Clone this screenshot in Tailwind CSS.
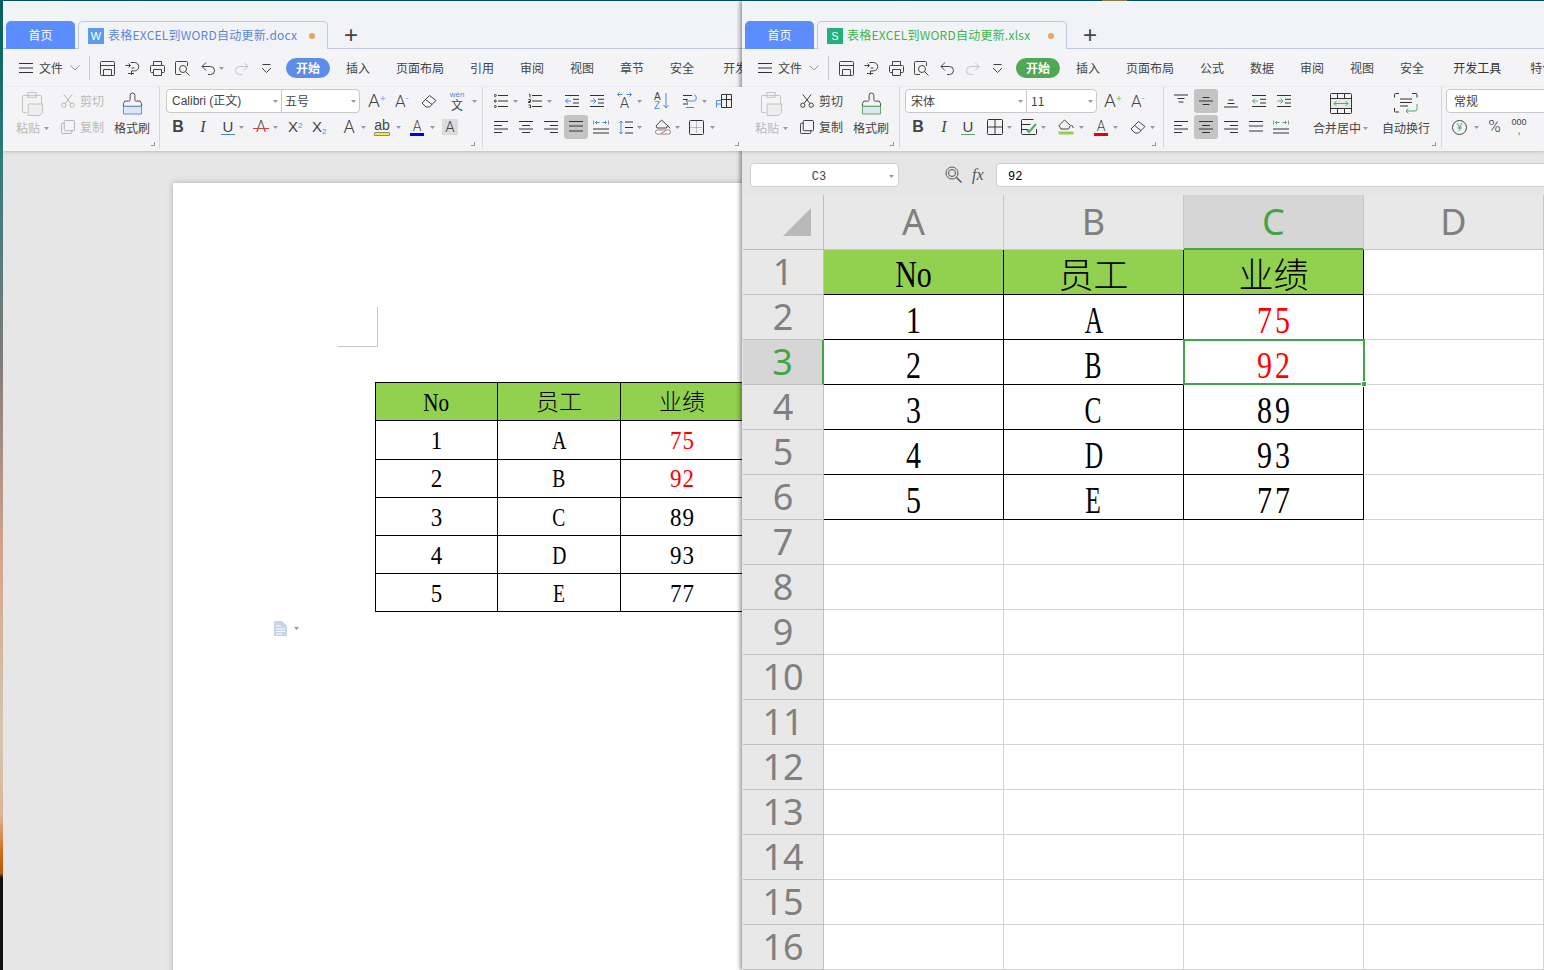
<!DOCTYPE html>
<html lang="zh-CN">
<head>
  <meta charset="UTF-8" />
  <title>表格EXCEL到WORD自动更新</title>
  <script src="https://cdn.jsdelivr.net/npm/@tailwindcss/browser@4"></script>
</head>
<body class="relative w-[1544px] h-[970px] overflow-hidden bg-[linear-gradient(180deg,#005e60_0%,#2f7a7c_16%,#7b7a7a_36%,#d9a58c_58%,#d2c7b0_76%,#dcb596_84%,#cc6a1c_88%,#b85a14_90%,#111111_90.5%,#111111_100%)] font-['Noto_Sans_CJK_SC',sans-serif] text-[12px] text-[#444444]">

  <svg class="hidden" xmlns="http://www.w3.org/2000/svg">
    <symbol id="caret" viewBox="0 0 5 3"><path d="M0 0h5L2.500 3z" fill="#999999"/></symbol>
    <symbol id="menu" viewBox="0 0 14 12"><path d="M0 1.500h14M0 6h14M0 10.500h14" stroke="#333333" fill="none"/></symbol>
    <symbol id="chev" viewBox="0 0 10 6"><path d="M.5.500 5 5 9.500.500" stroke="#999999" fill="none"/></symbol>
    <symbol id="save" viewBox="0 0 15 15"><path d="M1.500 .5h12a1 1 0 0 1 1 1v12a1 1 0 0 1-1 1h-12a1 1 0 0 1-1-1v-12a1 1 0 0 1 1-1zM.5 4.500h14M3.500 14.500v-6h8v6" stroke="#444444" fill="none"/></symbol>
    <symbol id="share" viewBox="0 0 15 15"><path d="M5.500 1.500h4a4.200 4.200 0 0 1 0 8.400H6.500v4M.5 4.500h5M3.500 2.500l2 2-2 2M6.500 7h3" stroke="#444444" fill="none"/><path d="M3 12.500h6" stroke="#444444" fill="none"/></symbol>
    <symbol id="print" viewBox="0 0 15 15"><path d="M3.500 4.500v-4h8v4M3.500 11.500h-2a1 1 0 0 1-1-1v-5a1 1 0 0 1 1-1h12a1 1 0 0 1 1 1v5a1 1 0 0 1-1 1h-2M3.500 8.500h8v6h-8z" stroke="#444444" fill="none"/></symbol>
    <symbol id="preview" viewBox="0 0 15 15"><path d="M12.500 5V1.500a1 1 0 0 0-1-1H1.500a1 1 0 0 0-1 1v11a1 1 0 0 0 1 1H6" stroke="#444444" fill="none"/><circle cx="8" cy="8" r="3.500" stroke="#444444" fill="none"/><path d="m10.500 10.500 4 4" stroke="#444444" fill="none"/></symbol>
    <symbol id="undo" viewBox="0 0 15 15"><path d="M5 1.500 1 5.500l4 4M1 5.500h8.500a4 4 0 0 1 0 8H7" stroke="currentColor" fill="none"/></symbol>
    <symbol id="redo" viewBox="0 0 15 15"><path d="m10 1.500 4 4-4 4M14 5.500H5.500a4 4 0 0 0 0 8H8" stroke="#c4c4c4" fill="none"/></symbol>
    <symbol id="more" viewBox="0 0 13 13"><path d="M2.500 2.500h8M2 6l4.500 4.500L11 6" stroke="#444444" fill="none"/></symbol>
    <symbol id="paste" viewBox="0 0 24 25"><path d="M3 3.500h17a1.500 1.500 0 0 1 1.500 1.500v8M1.500 20V5A1.500 1.500 0 0 1 3 3.500M1.500 20A1.500 1.500 0 0 0 3 21.500h3M7 .5h9v5H7z" stroke="#c0c0c0" fill="none"/><path d="M7.500 12.500h15v9l-3 3h-12z" stroke="#c0c0c0" fill="#eeeeee"/></symbol>
    <symbol id="cut" viewBox="0 0 15 15"><circle cx="3" cy="12" r="2.300" stroke="currentColor" fill="none"/><circle cx="12" cy="12" r="2.300" stroke="currentColor" fill="none"/><path d="M4.500 10 12 .5M10.500 10 3 .5" stroke="currentColor" fill="none"/></symbol>
    <symbol id="copy" viewBox="0 0 15 15"><path d="M4.500.500h9a1 1 0 0 1 1 1v9a1 1 0 0 1-1 1h-9a1 1 0 0 1-1-1v-9a1 1 0 0 1 1-1zM3.500 3.500h-2a1 1 0 0 0-1 1v9a1 1 0 0 0 1 1h9a1 1 0 0 0 1-1v-2" stroke="currentColor" fill="none"/></symbol>
    <symbol id="brush" viewBox="0 0 22 24"><path d="M8.500 3a2.500 2.500 0 0 1 5 0V7a1.500 1.500 0 0 0 1.500 2h4l1.500 2.500v3H1.500v-3L3 9h4a1.500 1.500 0 0 0 1.500-2z" stroke="#444444" fill="none"/><path d="M1.500 14.500h19v8h-19z" stroke="currentColor" fill="#dfe6ee"/></symbol>
    <symbol id="erase" viewBox="0 0 16 15"><path d="M1 9 8.500 1.500l6.500 5L8.500 13H5zM4.500 5.500l6.500 5" stroke="#444444" fill="none"/></symbol>
    <symbol id="list" viewBox="0 0 14 14"><path d="M4 1.500h10M4 7h10M4 12.500h10" stroke="#333333" fill="none"/><circle cx="1.300" cy="1.500" r="1" stroke="#333333" fill="none"/><circle cx="1.300" cy="7" r="1" stroke="#333333" fill="none"/><circle cx="1.300" cy="12.500" r="1" stroke="#333333" fill="none"/></symbol>
    <symbol id="num" viewBox="0 0 14 14"><path d="M4 1.500h10M4 7h10M4 12.500h10M1 .5h1v3M.5 5.500h2v2h-2v1h2M.5 11h2v3h-2" stroke="#333333" fill="none"/></symbol>
    <symbol id="outdent" viewBox="0 0 14 14"><path d="M0 1.500h14M8 5.300h6M8 9h6M0 12.500h14" stroke="#333333" fill="none"/><path d="M6 7H.5M3 4.500 .5 7 3 9.500" stroke="#4a8be0" fill="none"/></symbol>
    <symbol id="indent" viewBox="0 0 14 14"><path d="M0 1.500h14M8 5.300h6M8 9h6M0 12.500h14" stroke="#333333" fill="none"/><path d="M.5 7H6M3.500 4.500 6 7 3.500 9.500" stroke="#4a8be0" fill="none"/></symbol>
    <symbol id="linesp" viewBox="0 0 14 15"><path d="M0 1.500h9M0 5.500h5M0 10h5" stroke="#333333" fill="none"/><path d="M11 1c3 0 3 6 0 6H3M5 5 3 7l2 2M3 13.500h8" stroke="#4a8be0" fill="none"/></symbol>
    <symbol id="tbl" viewBox="0 0 16 16"><path d="M5.500 1.500h10v13h-10zM5.500 6.500h10M10.500 1.500v13" stroke="#333333" fill="none"/><path d="M.5 7.500h5M.5 11h5M.5 7.500v7" stroke="#4a8be0" fill="none"/></symbol>
    <symbol id="sortarrow" viewBox="0 0 6 16"><path d="M3 0v15M.5 12 3 15l2.500-3" stroke="#4a8be0" fill="none"/></symbol>
    <symbol id="widearrow" viewBox="0 0 15 5"><path d="M.5 2.500h5M.5 2.500l2-2M.5 2.500l2 2M14.500 2.500h-5M14.500 2.500l-2-2M14.500 2.500l-2 2" stroke="#4a8be0" fill="none"/></symbol>
    <symbol id="al" viewBox="0 0 14 14"><path d="M0 1.500h14M0 5.500h8M0 9h14M0 12.500h8" stroke="#333333" fill="none"/></symbol>
    <symbol id="ac" viewBox="0 0 14 14"><path d="M0 1.500h14M3 5.500h8M0 9h14M3 12.500h8" stroke="#333333" fill="none"/></symbol>
    <symbol id="ar" viewBox="0 0 14 14"><path d="M0 1.500h14M6 5.500h8M0 9h14M6 12.500h8" stroke="#333333" fill="none"/></symbol>
    <symbol id="aj" viewBox="0 0 14 14"><path d="M0 1.500h14M0 6h14M0 11h14" stroke="#333333" fill="none"/></symbol>
    <symbol id="adist" viewBox="0 0 16 14"><path d="M0 9h16M0 13h16M0 .5v4M16 .5v4" stroke="#333333" fill="none"/><path d="M2.500 2.500h4M2.500 2.500l1.500-1.500M2.500 2.500 4 4M13.500 2.500h-4M13.500 2.500 12 1M13.500 2.500 12 4" stroke="currentColor" fill="none"/></symbol>
    <symbol id="rowsp" viewBox="0 0 14 15"><path d="M6 2h8M6 7.500h8M6 13h8" stroke="#333333" fill="none"/><path d="M2 1v13M.3 2.800 2 1l1.700 1.800M.3 12.200 2 14l1.700-1.800" stroke="#4a8be0" fill="none"/></symbol>
    <symbol id="shade" viewBox="0 0 16 16"><path d="M1 7 6.500 1l6 5.500-1 2.500H2z" stroke="#444444" fill="none"/><path d="M13 6.500l2 3" stroke="#444444" fill="none"/><rect x=".5" y="11" width="15" height="4" rx="2" stroke="#888888" fill="#ffffff"/><path d="m6 14.500 5-3" stroke="#e06060" fill="none"/></symbol>
    <symbol id="fill" viewBox="0 0 16 16"><path d="M1 6.500 6.500 1l6 5.500-2 3.500H3z" stroke="#444444" fill="none"/><path d="M13.500 6l2 3" stroke="#444444" fill="none"/><rect x=".5" y="12.500" width="15" height="3" rx="1" fill="#92d050"/></symbol>
    <symbol id="border" viewBox="0 0 15 15"><path d="M1.500.5h12a1 1 0 0 1 1 1v12a1 1 0 0 1-1 1h-12a1 1 0 0 1-1-1v-12a1 1 0 0 1 1-1z" stroke="#333333" fill="none"/><path d="M7.500 1.500v12M1.500 7.500h12" stroke="#888888" stroke-dasharray="1 1" fill="none"/></symbol>
    <symbol id="grid4" viewBox="0 0 16 16"><path d="M1.500 .5h13a1 1 0 0 1 1 1v13a1 1 0 0 1-1 1h-13a1 1 0 0 1-1-1v-13a1 1 0 0 1 1-1zM8 .5v15M.5 8h15" stroke="#333333" fill="none"/></symbol>
    <symbol id="cell" viewBox="0 0 16 16"><path d="M15.500 10v4.500a1 1 0 0 1-1 1h-13a1 1 0 0 1-1-1v-13a1 1 0 0 1 1-1h11M.5 5.500h9M.5 10.500h7" stroke="#333333" fill="none"/><path d="m6 11 2 2 7-8" stroke="#55a868" stroke-width="2" fill="none"/></symbol>
    <symbol id="vtop" viewBox="0 0 14 14"><path d="M0 1h14M3.500 4.500h7M4.500 8h5" stroke="#333333" fill="none"/></symbol>
    <symbol id="vmid" viewBox="0 0 14 14"><path d="M0 7h14M3.500 3.500h7M3.500 10.500h7" stroke="#333333" fill="none"/></symbol>
    <symbol id="vbot" viewBox="0 0 14 14"><path d="M0 13h14M4.500 6h5M3.500 9.500h7" stroke="#333333" fill="none"/></symbol>
    <symbol id="outg" viewBox="0 0 14 14"><path d="M0 1.500h14M8 5.300h6M8 9h6M0 12.500h14" stroke="#333333" fill="none"/><path d="M6 7H.5M3 4.500 .5 7 3 9.500" stroke="#55a868" fill="none"/></symbol>
    <symbol id="ing" viewBox="0 0 14 14"><path d="M0 1.500h14M8 5.300h6M8 9h6M0 12.500h14" stroke="#333333" fill="none"/><path d="M.5 7H6M3.500 4.500 6 7 3.500 9.500" stroke="#55a868" fill="none"/></symbol>
    <symbol id="merge" viewBox="0 0 22 21"><path d="M1 5.500h20v10H1z" fill="#e3efe6"/><path d="M1.500.5h19a1 1 0 0 1 1 1v18a1 1 0 0 1-1 1h-19a1 1 0 0 1-1-1v-18a1 1 0 0 1 1-1z" stroke="#333333" fill="none"/><path d="M.5 5.500h21M.5 15.500h21M7.500.5v5M14.500.5v5M7.500 15.500v5M14.500 15.500v5" stroke="#333333" fill="none"/><path d="M4 10.500h14M4 10.500l2.500-2.500M4 10.500 6.500 13M18 10.500 15.500 8M18 10.500 15.500 13" stroke="#55a868" fill="none"/></symbol>
    <symbol id="wrap" viewBox="0 0 24 21"><path d="M5 .5H1.500a1 1 0 0 0-1 1v3M18 .5h4a1 1 0 0 1 1 1v3M.5 15v3a1 1 0 0 0 1 1H5M6 6h12M6 9.500h12M6 13h8" stroke="#333333" fill="none"/><path d="M23 11v5a2 2 0 0 1-2 2H12M14.500 15.500 12 18l2.500 2.500" stroke="#55a868" fill="none"/></symbol>
    <symbol id="zoomfx" viewBox="0 0 17 17"><circle cx="7" cy="7" r="6" stroke="#555555" fill="none"/><circle cx="7" cy="7" r="3.500" stroke="#555555" fill="none"/><path d="m11.500 11.500 5 5" stroke="#555555" stroke-width="1.500" fill="none"/></symbol>
    <symbol id="doc" viewBox="0 0 13 15"><path d="M0 0h8l5 5v10H0z" fill="#c5d5ea"/><path d="M2 5h5M2 8h9M2 10.500h9M2 13h6" stroke="#ffffff" fill="none"/></symbol>
  </svg>

  <!-- window: word -->
  <div class="absolute left-[3px] top-[1px] w-[739px] h-[969px] flex flex-col overflow-hidden bg-[#e6e6e6]">
    <div class="h-[48px] shrink-0 flex items-end bg-[#f2f3f7] border-b border-[#c3c9dd]">
      <div class="ml-[3px] w-[69px] h-[28px] -mb-px rounded-t-[5px] bg-[#5c8dff] text-white text-center leading-[28px]">首页</div>
      <div class="ml-[3px] w-[250px] h-[28px] -mb-px flex items-center rounded-t-[5px] border border-b-0 border-[#c3c9dd] bg-[#f2f3f7]">
        <div class="ml-[9px] w-[16px] h-[16px] bg-[#5c9cec] text-white text-[11px] leading-[16px] text-center font-['Liberation_Sans',sans-serif]">W</div>
        <span class="ml-[4px] -mt-[2px] text-[#5b87d8] tracking-[0.23px] whitespace-nowrap">表格EXCEL到WORD自动更新.docx</span>
        <div class="ml-auto mr-[12px] w-[6px] h-[6px] rounded-full bg-[#eba35d]"></div>
      </div>
      <span class="ml-[16px] mb-[-2px] text-[24px] leading-[30px] font-light text-[#444444] font-['Liberation_Sans',sans-serif]">+</span>
    </div>
    <div class="h-[38px] shrink-0 flex items-center bg-[#f4f4f6] whitespace-nowrap">
      <svg class="ml-[16px] w-[14px] h-[12px] shrink-0"><use href="#menu"/></svg>
      <span class="ml-[6px] shrink-0">文件</span>
      <svg class="ml-[7px] w-[10px] h-[6px] shrink-0"><use href="#chev"/></svg>
      <div class="ml-[9px] w-px h-[24px] shrink-0 bg-[#c8c8c8]"></div>
      <svg class="ml-[10px] w-[15px] h-[15px] shrink-0"><use href="#save"/></svg>
      <svg class="ml-[10px] w-[15px] h-[15px] shrink-0"><use href="#share"/></svg>
      <svg class="ml-[10px] w-[15px] h-[15px] shrink-0"><use href="#print"/></svg>
      <svg class="ml-[10px] w-[15px] h-[15px] shrink-0"><use href="#preview"/></svg>
      <svg class="ml-[11px] w-[15px] h-[15px] shrink-0 text-[#444444]"><use href="#undo"/></svg>
      <svg class="ml-[3px] w-[5px] h-[3px] shrink-0"><use href="#caret"/></svg>
      <svg class="ml-[10px] w-[15px] h-[15px] shrink-0"><use href="#redo"/></svg>
      <svg class="ml-[11px] w-[13px] h-[13px] shrink-0"><use href="#more"/></svg>
      <div class="ml-[13px] w-[44px] h-[20px] shrink-0 rounded-full bg-[#5c8de8] text-white text-center leading-[20px] font-bold">开始</div>
      <span class="ml-[16px] shrink-0">插入</span>
      <span class="ml-[26px] shrink-0">页面布局</span>
      <span class="ml-[26px] shrink-0">引用</span>
      <span class="ml-[26px] shrink-0">审阅</span>
      <span class="ml-[26px] shrink-0">视图</span>
      <span class="ml-[26px] shrink-0">章节</span>
      <span class="ml-[26px] shrink-0">安全</span>
      <span class="ml-[29px] shrink-0">开发工具</span>
    </div>
    <div class="h-[64px] shrink-0 flex bg-[#f4f4f6] shadow-[0_1px_3px_rgba(0,0,0,0.18)] z-10 whitespace-nowrap">
      <!-- clipboard -->
      <div class="relative w-[157px] h-[61px] shrink-0 flex border-r border-[#d8d8d8] pl-[13px] pt-[2px]">
        <div class="w-[36px] shrink-0 flex flex-col">
          <svg class="ml-[5px] mt-[3px] w-[23px] h-[24px]"><use href="#paste"/></svg>
          <div class="mt-[3px] flex items-center text-[#b9b9b9]">粘贴<svg class="ml-[4px] w-[5px] h-[3px]"><use href="#caret"/></svg></div>
        </div>
        <div class="ml-[9px] w-[43px] shrink-0 flex flex-col gap-[2px] text-[#b9b9b9]">
          <div class="h-[24px] flex items-center"><svg class="w-[14px] h-[14px] text-[#b0b0b0]"><use href="#cut"/></svg><span class="ml-[5px]">剪切</span></div>
          <div class="h-[24px] flex items-center"><svg class="w-[14px] h-[14px] text-[#b0b0b0]"><use href="#copy"/></svg><span class="ml-[5px]">复制</span></div>
        </div>
        <div class="ml-[10px] w-[36px] shrink-0 flex flex-col items-center">
          <svg class="mt-[3px] w-[21px] h-[24px] text-[#5b8ee0]"><use href="#brush"/></svg>
          <div class="mt-[3px]">格式刷</div>
        </div>
        <div class="absolute right-[4px] bottom-[2px] w-[4px] h-[4px] border-r border-b border-[#999999]"></div>
      </div>
      <!-- font -->
      <div class="relative w-[323px] h-[61px] shrink-0 flex flex-col gap-[2px] pt-[2px] border-r border-[#d8d8d8]">
        <div class="h-[24px] flex items-center">
          <div class="ml-[6px] w-[194px] h-[24px] flex bg-white border border-[#c9c9c9] rounded-[4px]">
            <div class="w-[115px] flex items-center pl-[5px] border-r border-[#c9c9c9] font-['Liberation_Sans','Noto_Sans_CJK_SC',sans-serif]">Calibri (正文)<svg class="ml-auto mr-[3px] w-[5px] h-[3px]"><use href="#caret"/></svg></div>
            <div class="flex-1 flex items-center pl-[3px]">五号<svg class="ml-auto mr-[3px] w-[5px] h-[3px]"><use href="#caret"/></svg></div>
          </div>
          <span class="ml-[8px] w-[16px] text-[19px] leading-[20px] font-light font-['Roboto',sans-serif]">A<sup class="text-[10px] text-[#5b8ee0]">+</sup></span>
          <span class="ml-[11px] w-[15px] text-[17px] leading-[20px] font-light font-['Roboto',sans-serif]">A<sup class="text-[10px] text-[#5b8ee0]">-</sup></span>
          <svg class="ml-[11px] w-[16px] h-[15px]"><use href="#erase"/></svg>
          <div class="ml-[12px] w-[16px] flex flex-col items-center leading-none"><span class="text-[8px] text-[#4a8be0] font-['Liberation_Sans',sans-serif]">wén</span><span class="text-[12px]">文</span></div>
          <svg class="ml-[7px] w-[5px] h-[3px]"><use href="#caret"/></svg>
        </div>
        <div class="h-[24px] flex items-center font-['Liberation_Sans',sans-serif]">
          <span class="ml-[11px] w-[14px] text-[16px] font-bold text-center">B</span>
          <span class="ml-[12px] w-[12px] text-[16px] italic text-center font-['Liberation_Serif',serif]">I</span>
          <div class="ml-[12px] w-[14px] text-[15px] leading-[15px] text-center border-b border-[#4a8be0]">U</div>
          <svg class="ml-[4px] w-[5px] h-[3px]"><use href="#caret"/></svg>
          <div class="relative ml-[9px] w-[16px] text-[16px] leading-[16px] text-center font-light font-['Roboto',sans-serif]">A<div class="absolute left-0 right-0 top-[9px] h-px bg-[#e03c3c]"></div></div>
          <svg class="ml-[4px] w-[5px] h-[3px]"><use href="#caret"/></svg>
          <span class="ml-[10px] w-[16px] text-[15px]">X<sup class="text-[8px] text-[#4a8be0]">2</sup></span>
          <span class="ml-[8px] w-[17px] text-[15px]">X<sub class="text-[8px] text-[#4a8be0]">2</sub></span>
          <span class="ml-[12px] w-[16px] text-[18px] leading-[18px] text-center font-light font-['Roboto',sans-serif]">A</span>
          <svg class="ml-[4px] w-[5px] h-[3px]"><use href="#caret"/></svg>
          <div class="ml-[8px] w-[16px] flex flex-col items-center leading-none"><span class="text-[14px]">ab</span><div class="w-[16px] h-[4px] rounded-[1px] bg-[#f7f01c] border border-[#888888]"></div></div>
          <svg class="ml-[6px] w-[5px] h-[3px]"><use href="#caret"/></svg>
          <div class="ml-[9px] w-[14px] flex flex-col items-center leading-none"><span class="text-[14px] font-light font-['Roboto',sans-serif]">A</span><div class="w-[14px] h-[3px] bg-[#0000ee]"></div></div>
          <svg class="ml-[6px] w-[5px] h-[3px]"><use href="#caret"/></svg>
          <span class="ml-[7px] w-[16px] h-[16px] bg-[#dcdcdc] text-[15px] leading-[16px] text-center font-light font-['Roboto',sans-serif]">A</span>
        </div>
        <div class="absolute right-[7px] bottom-[2px] w-[4px] h-[4px] border-r border-b border-[#999999]"></div>
      </div>
      <!-- paragraph -->
      <div class="relative w-[259px] h-[61px] shrink-0 flex flex-col gap-[2px] pt-[2px]">
        <div class="h-[24px] flex items-center">
          <svg class="ml-[11px] w-[14px] h-[14px]"><use href="#list"/></svg>
          <svg class="ml-[5px] w-[5px] h-[3px]"><use href="#caret"/></svg>
          <svg class="ml-[10px] w-[14px] h-[14px]"><use href="#num"/></svg>
          <svg class="ml-[5px] w-[5px] h-[3px]"><use href="#caret"/></svg>
          <svg class="ml-[13px] w-[14px] h-[14px]"><use href="#outdent"/></svg>
          <svg class="ml-[11px] w-[14px] h-[14px]"><use href="#indent"/></svg>
          <div class="ml-[13px] w-[15px] flex flex-col items-center"><svg class="w-[15px] h-[5px]"><use href="#widearrow"/></svg><span class="text-[15px] leading-[13px] font-light font-['Roboto',sans-serif]">A</span></div>
          <svg class="ml-[5px] w-[5px] h-[3px]"><use href="#caret"/></svg>
          <div class="ml-[12px] w-[16px] flex items-center"><div class="flex flex-col text-[10px] leading-[9px] font-['Liberation_Sans',sans-serif]"><span>A</span><span class="text-[#4a8be0]">Z</span></div><svg class="ml-[2px] w-[6px] h-[16px]"><use href="#sortarrow"/></svg></div>
          <svg class="ml-[13px] w-[14px] h-[15px]"><use href="#linesp"/></svg>
          <svg class="ml-[5px] w-[5px] h-[3px]"><use href="#caret"/></svg>
          <svg class="ml-[9px] w-[16px] h-[16px]"><use href="#tbl"/></svg>
        </div>
        <div class="h-[24px] flex items-center">
          <svg class="ml-[11px] w-[14px] h-[14px]"><use href="#al"/></svg>
          <svg class="ml-[11px] w-[14px] h-[14px]"><use href="#ac"/></svg>
          <svg class="ml-[11px] w-[14px] h-[14px]"><use href="#ar"/></svg>
          <div class="ml-[6px] w-[24px] h-[24px] flex items-center justify-center rounded-[3px] bg-[#c4c4c4]"><svg class="w-[14px] h-[14px]"><use href="#aj"/></svg></div>
          <svg class="ml-[5px] w-[16px] h-[14px] text-[#4a8be0]"><use href="#adist"/></svg>
          <svg class="ml-[10px] w-[14px] h-[15px]"><use href="#rowsp"/></svg>
          <svg class="ml-[4px] w-[5px] h-[3px]"><use href="#caret"/></svg>
          <svg class="ml-[13px] w-[16px] h-[16px]"><use href="#shade"/></svg>
          <svg class="ml-[4px] w-[5px] h-[3px]"><use href="#caret"/></svg>
          <svg class="ml-[9px] w-[15px] h-[15px]"><use href="#border"/></svg>
          <svg class="ml-[6px] w-[5px] h-[3px]"><use href="#caret"/></svg>
        </div>
        <div class="absolute right-[3px] bottom-[2px] w-[4px] h-[4px] border-r border-b border-[#999999]"></div>
      </div>
    </div>
    <!-- document -->
    <div class="flex-1 min-h-0 overflow-hidden pl-[170px] pt-[32px]">
      <div class="w-[700px] h-[800px] bg-white shadow-[0_0_6px_rgba(0,0,0,0.25)] pt-[124px]">
        <div class="ml-[165px] w-[40px] h-[40px] border-r border-b border-[#c8c8c8]"></div>
        <div class="ml-[202px] mt-[35px] w-[500px] border-l border-t border-black grid grid-cols-[122px_123px_200px] font-['Liberation_Serif','Noto_Sans_CJK_SC',serif] text-[23px] text-black text-center">
          <div class="h-[38px] leading-[40px] bg-[#92d050] border-r border-b border-black"><span class="inline-block scale-y-[1.1] scale-x-[0.92]">No</span></div>
          <div class="h-[38px] leading-[40px] bg-[#92d050] border-r border-b border-black font-light"><span class="inline-block">员工</span></div>
          <div class="h-[38px] leading-[40px] bg-[#92d050] border-b border-black pr-[78px] font-light"><span class="inline-block">业绩</span></div>
          <div class="h-[39px] leading-[39px] border-r border-b border-black"><span class="inline-block scale-y-[1.1]">1</span></div>
          <div class="h-[39px] leading-[39px] border-r border-b border-black"><span class="inline-block scale-y-[1.1] scale-x-[0.85]">A</span></div>
          <div class="h-[39px] leading-[39px] border-b border-black pr-[78px] text-[#ff0000]"><span class="inline-block scale-y-[1.1] tracking-[1px] pl-[1px]">75</span></div>
          <div class="h-[38px] leading-[38px] border-r border-b border-black"><span class="inline-block scale-y-[1.1]">2</span></div>
          <div class="h-[38px] leading-[38px] border-r border-b border-black"><span class="inline-block scale-y-[1.1] scale-x-[0.85]">B</span></div>
          <div class="h-[38px] leading-[38px] border-b border-black pr-[78px] text-[#ff0000]"><span class="inline-block scale-y-[1.1] tracking-[1px] pl-[1px]">92</span></div>
          <div class="h-[38px] leading-[39px] border-r border-b border-black"><span class="inline-block scale-y-[1.1]">3</span></div>
          <div class="h-[38px] leading-[39px] border-r border-b border-black"><span class="inline-block scale-y-[1.1] scale-x-[0.85]">C</span></div>
          <div class="h-[38px] leading-[39px] border-b border-black pr-[78px]"><span class="inline-block scale-y-[1.1] tracking-[1px] pl-[1px]">89</span></div>
          <div class="h-[38px] leading-[39px] border-r border-b border-black"><span class="inline-block scale-y-[1.1]">4</span></div>
          <div class="h-[38px] leading-[39px] border-r border-b border-black"><span class="inline-block scale-y-[1.1] scale-x-[0.85]">D</span></div>
          <div class="h-[38px] leading-[39px] border-b border-black pr-[78px]"><span class="inline-block scale-y-[1.1] tracking-[1px] pl-[1px]">93</span></div>
          <div class="h-[38px] leading-[39px] border-r border-b border-black"><span class="inline-block scale-y-[1.1]">5</span></div>
          <div class="h-[38px] leading-[39px] border-r border-b border-black"><span class="inline-block scale-y-[1.1] scale-x-[0.85]">E</span></div>
          <div class="h-[38px] leading-[39px] border-b border-black pr-[78px]"><span class="inline-block scale-y-[1.1] tracking-[1px] pl-[1px]">77</span></div>
        </div>
        <div class="ml-[101px] mt-[9px] flex items-center">
          <svg class="w-[13px] h-[15px]"><use href="#doc"/></svg>
          <svg class="ml-[7px] w-[5px] h-[3px]"><use href="#caret"/></svg>
        </div>
      </div>
    </div>
  </div>

  <!-- window: excel -->
  <div class="absolute left-[742px] top-[1px] w-[802px] h-[969px] flex flex-col overflow-hidden bg-[#e6e6e6] shadow-[-2px_0_4px_rgba(0,0,0,0.4)]">
    <div class="h-[48px] shrink-0 flex items-end bg-[#f2f3f7] border-b border-[#c3c9dd]">
      <div class="ml-[3px] w-[69px] h-[28px] -mb-px rounded-t-[5px] bg-[#5c8dff] text-white text-center leading-[28px]">首页</div>
      <div class="ml-[3px] w-[250px] h-[28px] -mb-px flex items-center rounded-t-[5px] border border-b-0 border-[#c3c9dd] bg-[#f2f3f7]">
        <div class="ml-[9px] w-[16px] h-[16px] bg-[#22b07d] text-white text-[11px] leading-[16px] text-center font-['Liberation_Sans',sans-serif]">S</div>
        <span class="ml-[4px] -mt-[2px] text-[#3cb54b] tracking-[0.23px] whitespace-nowrap">表格EXCEL到WORD自动更新.xlsx</span>
        <div class="ml-auto mr-[12px] w-[6px] h-[6px] rounded-full bg-[#eba35d]"></div>
      </div>
      <span class="ml-[16px] mb-[-2px] text-[24px] leading-[30px] font-light text-[#444444] font-['Liberation_Sans',sans-serif]">+</span>
    </div>
    <div class="h-[38px] shrink-0 flex items-center bg-[#f4f4f6] whitespace-nowrap">
      <svg class="ml-[16px] w-[14px] h-[12px] shrink-0"><use href="#menu"/></svg>
      <span class="ml-[6px] shrink-0">文件</span>
      <svg class="ml-[7px] w-[10px] h-[6px] shrink-0"><use href="#chev"/></svg>
      <div class="ml-[9px] w-px h-[24px] shrink-0 bg-[#c8c8c8]"></div>
      <svg class="ml-[10px] w-[15px] h-[15px] shrink-0"><use href="#save"/></svg>
      <svg class="ml-[10px] w-[15px] h-[15px] shrink-0"><use href="#share"/></svg>
      <svg class="ml-[10px] w-[15px] h-[15px] shrink-0"><use href="#print"/></svg>
      <svg class="ml-[10px] w-[15px] h-[15px] shrink-0"><use href="#preview"/></svg>
      <svg class="ml-[11px] w-[15px] h-[15px] shrink-0 text-[#444444]"><use href="#undo"/></svg>
      <svg class="ml-[10px] w-[15px] h-[15px] shrink-0"><use href="#redo"/></svg>
      <svg class="ml-[11px] w-[13px] h-[13px] shrink-0"><use href="#more"/></svg>
      <div class="ml-[12px] w-[44px] h-[20px] shrink-0 rounded-full bg-[#50a856] text-white text-center leading-[20px] font-bold">开始</div>
      <span class="ml-[16px] shrink-0">插入</span>
      <span class="ml-[26px] shrink-0">页面布局</span>
      <span class="ml-[26px] shrink-0">公式</span>
      <span class="ml-[26px] shrink-0">数据</span>
      <span class="ml-[26px] shrink-0">审阅</span>
      <span class="ml-[26px] shrink-0">视图</span>
      <span class="ml-[26px] shrink-0">安全</span>
      <span class="ml-[29px] shrink-0 text-[#333333]">开发工具</span>
      <span class="ml-[29px] shrink-0">特色功能</span>
    </div>
    <div class="h-[64px] shrink-0 flex bg-[#f4f4f6] shadow-[0_1px_3px_rgba(0,0,0,0.18)] z-10 whitespace-nowrap">
      <!-- clipboard -->
      <div class="relative w-[158px] h-[61px] shrink-0 flex border-r border-[#d8d8d8] pl-[13px] pt-[2px]">
        <div class="w-[36px] shrink-0 flex flex-col">
          <svg class="ml-[5px] mt-[3px] w-[23px] h-[24px]"><use href="#paste"/></svg>
          <div class="mt-[3px] flex items-center text-[#b9b9b9]">粘贴<svg class="ml-[4px] w-[5px] h-[3px]"><use href="#caret"/></svg></div>
        </div>
        <div class="ml-[9px] w-[43px] shrink-0 flex flex-col gap-[2px]">
          <div class="h-[24px] flex items-center"><svg class="w-[14px] h-[14px] text-[#333333]"><use href="#cut"/></svg><span class="ml-[5px]">剪切</span></div>
          <div class="h-[24px] flex items-center"><svg class="w-[14px] h-[14px] text-[#333333]"><use href="#copy"/></svg><span class="ml-[5px]">复制</span></div>
        </div>
        <div class="ml-[10px] w-[36px] shrink-0 flex flex-col items-center">
          <svg class="mt-[3px] w-[21px] h-[24px] text-[#55a868]"><use href="#brush"/></svg>
          <div class="mt-[3px]">格式刷</div>
        </div>
        <div class="absolute right-[5px] bottom-[2px] w-[4px] h-[4px] border-r border-b border-[#999999]"></div>
      </div>
      <!-- font -->
      <div class="relative w-[264px] h-[61px] shrink-0 flex flex-col gap-[2px] pt-[2px] border-r border-[#d8d8d8]">
        <div class="h-[24px] flex items-center">
          <div class="ml-[5px] w-[192px] h-[24px] flex bg-white border border-[#c9c9c9] rounded-[4px]">
            <div class="w-[121px] flex items-center pl-[5px] border-r border-[#c9c9c9]">宋体<svg class="ml-auto mr-[3px] w-[5px] h-[3px]"><use href="#caret"/></svg></div>
            <div class="flex-1 flex items-center pl-[4px]">11<svg class="ml-auto mr-[3px] w-[5px] h-[3px]"><use href="#caret"/></svg></div>
          </div>
          <span class="ml-[7px] w-[16px] text-[19px] leading-[20px] font-light font-['Roboto',sans-serif]">A<sup class="text-[10px] text-[#55a868]">+</sup></span>
          <span class="ml-[11px] w-[15px] text-[17px] leading-[20px] font-light font-['Roboto',sans-serif]">A<sup class="text-[10px] text-[#55a868]">-</sup></span>
        </div>
        <div class="h-[24px] flex items-center font-['Liberation_Sans',sans-serif]">
          <span class="ml-[11px] w-[14px] text-[16px] font-bold text-center">B</span>
          <span class="ml-[13px] w-[12px] text-[16px] italic text-center font-['Liberation_Serif',serif]">I</span>
          <div class="ml-[11px] w-[14px] text-[15px] leading-[15px] text-center border-b border-[#55a868]">U</div>
          <svg class="ml-[12px] w-[16px] h-[16px]"><use href="#grid4"/></svg>
          <svg class="ml-[4px] w-[5px] h-[3px]"><use href="#caret"/></svg>
          <svg class="ml-[9px] w-[16px] h-[16px]"><use href="#cell"/></svg>
          <svg class="ml-[4px] w-[5px] h-[3px]"><use href="#caret"/></svg>
          <svg class="ml-[12px] w-[16px] h-[16px]"><use href="#fill"/></svg>
          <svg class="ml-[5px] w-[5px] h-[3px]"><use href="#caret"/></svg>
          <div class="ml-[10px] w-[14px] flex flex-col items-center leading-none"><span class="text-[14px] font-light font-['Roboto',sans-serif]">A</span><div class="w-[14px] h-[3px] bg-[#ee0000]"></div></div>
          <svg class="ml-[5px] w-[5px] h-[3px]"><use href="#caret"/></svg>
          <svg class="ml-[12px] w-[16px] h-[15px]"><use href="#erase"/></svg>
          <svg class="ml-[4px] w-[5px] h-[3px]"><use href="#caret"/></svg>
        </div>
        <div class="absolute right-[7px] bottom-[2px] w-[4px] h-[4px] border-r border-b border-[#999999]"></div>
      </div>
      <!-- align -->
      <div class="relative w-[278px] h-[61px] shrink-0 flex border-r border-[#d8d8d8]">
        <div class="w-[127px] shrink-0 flex flex-col gap-[2px] pt-[2px]">
          <div class="h-[24px] flex items-center">
            <svg class="ml-[10px] w-[14px] h-[14px]"><use href="#vtop"/></svg>
            <div class="ml-[6px] w-[24px] h-[24px] flex items-center justify-center rounded-[3px] bg-[#c4c4c4]"><svg class="w-[14px] h-[14px]"><use href="#vmid"/></svg></div>
            <svg class="ml-[6px] w-[14px] h-[14px]"><use href="#vbot"/></svg>
            <svg class="ml-[14px] w-[14px] h-[14px]"><use href="#outg"/></svg>
            <svg class="ml-[11px] w-[14px] h-[14px]"><use href="#ing"/></svg>
          </div>
          <div class="h-[24px] flex items-center">
            <svg class="ml-[10px] w-[14px] h-[14px]"><use href="#al"/></svg>
            <div class="ml-[6px] w-[24px] h-[24px] flex items-center justify-center rounded-[3px] bg-[#c4c4c4]"><svg class="w-[14px] h-[14px]"><use href="#ac"/></svg></div>
            <svg class="ml-[6px] w-[14px] h-[14px]"><use href="#ar"/></svg>
            <svg class="ml-[11px] w-[14px] h-[14px]"><use href="#aj"/></svg>
            <svg class="ml-[10px] w-[16px] h-[14px] text-[#55a868]"><use href="#adist"/></svg>
          </div>
        </div>
        <div class="ml-[22px] w-[56px] shrink-0 flex flex-col">
          <svg class="ml-[17px] mt-[6px] w-[22px] h-[21px]"><use href="#merge"/></svg>
          <div class="mt-[5px] flex items-center">合并居中<svg class="ml-[2px] w-[5px] h-[3px]"><use href="#caret"/></svg></div>
        </div>
        <div class="ml-[13px] w-[48px] shrink-0 flex flex-col">
          <svg class="ml-[12px] mt-[6px] w-[24px] h-[21px]"><use href="#wrap"/></svg>
          <div class="mt-[5px]">自动换行</div>
        </div>
        <div class="absolute right-[5px] bottom-[2px] w-[4px] h-[4px] border-r border-b border-[#999999]"></div>
      </div>
      <!-- number -->
      <div class="flex-1 h-[61px] flex flex-col gap-[2px] pt-[2px] overflow-hidden">
        <div class="h-[24px] flex items-center">
          <div class="ml-[4px] w-[130px] h-[24px] shrink-0 flex items-center pl-[7px] bg-white border border-[#c9c9c9] rounded-[4px]">常规</div>
        </div>
        <div class="h-[24px] flex items-center font-['Liberation_Sans',sans-serif]">
          <div class="ml-[10px] w-[15px] h-[15px] rounded-full border border-[#444444] text-[10px] leading-[13px] text-center text-[#55a868]">¥</div>
          <svg class="ml-[7px] w-[5px] h-[3px]"><use href="#caret"/></svg>
          <span class="ml-[8px] w-[15px] text-[17px] text-center font-light font-['Roboto',sans-serif]">%</span>
          <div class="ml-[10px] w-[14px] flex flex-col items-center text-[9px] leading-[9px]"><span>000</span><span class="text-[#55a868] font-bold">,</span></div>
        </div>
      </div>
    </div>
    <!-- formula bar -->
    <div class="h-[44px] shrink-0 flex items-end pb-[8px]">
      <div class="ml-[8px] w-[149px] h-[24px] flex items-center bg-white border border-[#cfcfcf] rounded-[4px] pt-[3px] font-['Liberation_Mono',monospace]">
        <span class="flex-1 text-center pr-[2px]">C3</span>
        <svg class="mr-[4px] w-[5px] h-[3px]"><use href="#caret"/></svg>
      </div>
      <svg class="ml-[46px] mb-[4px] w-[17px] h-[17px]"><use href="#zoomfx"/></svg>
      <span class="ml-[10px] mb-[3px] w-[16px] text-[16px] leading-[18px] italic text-[#555555] font-['Liberation_Serif',serif]">fx</span>
      <div class="ml-[8px] flex-1 h-[24px] flex items-center pl-[11px] pt-[3px] bg-white border-y border-l border-[#cfcfcf] rounded-l-[4px] text-black font-['Liberation_Mono',monospace]">92</div>
    </div>
    <!-- sheet -->
    <div class="relative flex-1 min-h-0 ml-px grid grid-cols-[81px_180px_180px_180px_180px_1fr] grid-rows-[55px] auto-rows-[45px] bg-white font-['Liberation_Serif','Noto_Sans_CJK_SC',serif] text-[30px] text-black text-center overflow-hidden">
      <div class="bg-[#e8e8e8] border-r border-b border-[#bdbdbd] flex items-center justify-end pr-[12px]"><div class="w-0 h-0 border-l-[28px] border-l-transparent border-b-[28px] border-b-[#b9b9b9]"></div></div>
      <div class="bg-[#e8e8e8] border-r border-b border-[#c8c8c8] text-[#808080] text-[36px] leading-[54px] font-['Noto_Sans',sans-serif]">A</div>
      <div class="bg-[#e8e8e8] border-r border-b border-[#c8c8c8] text-[#808080] text-[36px] leading-[54px] font-['Noto_Sans',sans-serif]">B</div>
      <div class="bg-[#d6d6d6] border-r border-b-2 border-r-[#c8c8c8] border-b-[#43a546] text-[#43a546] text-[36px] leading-[54px] font-['Noto_Sans',sans-serif]">C</div>
      <div class="bg-[#e8e8e8] border-r border-b border-[#c8c8c8] text-[#808080] text-[36px] leading-[54px] font-['Noto_Sans',sans-serif]">D</div>
      <div class="bg-[#e8e8e8] border-b border-[#c8c8c8]"></div>

      <div class="bg-[#e8e8e8] border-r border-b border-[#c0c0c0] text-[#808080] text-[36px] leading-[44px] font-['Noto_Sans',sans-serif]">1</div>
      <div class="bg-[#92d050] border-r border-b border-black leading-[48px]"><span class="inline-block scale-y-[1.27]">No</span></div>
      <div class="bg-[#92d050] border-r border-b border-black text-[35px] leading-[54px] font-light">员工</div>
      <div class="bg-[#92d050] border-r border-b border-black text-[35px] leading-[54px] font-light">业绩</div>
      <div class="border-r border-b border-[#d4d4d4]"></div><div class="border-b border-[#d4d4d4]"></div>

      <div class="bg-[#e8e8e8] border-r border-b border-[#c0c0c0] text-[#808080] text-[36px] leading-[44px] font-['Noto_Sans',sans-serif]">2</div>
      <div class="border-r border-b border-black leading-[50px]"><span class="inline-block scale-y-[1.27]">1</span></div>
      <div class="border-r border-b border-black leading-[50px]"><span class="inline-block scale-y-[1.27] scale-x-[0.85]">A</span></div>
      <div class="border-r border-b border-black leading-[50px] text-[#ff0000]"><span class="inline-block scale-y-[1.27] tracking-[3px] pl-[3px]">75</span></div>
      <div class="border-r border-b border-[#d4d4d4]"></div><div class="border-b border-[#d4d4d4]"></div>

      <div class="bg-[#d6d6d6] border-r-2 border-r-[#43a546] border-b border-b-[#c0c0c0] text-[#43a546] text-[36px] leading-[44px] font-['Noto_Sans',sans-serif]">3</div>
      <div class="border-r border-b border-black leading-[50px]"><span class="inline-block scale-y-[1.27]">2</span></div>
      <div class="border-r border-b border-black leading-[50px]"><span class="inline-block scale-y-[1.27] scale-x-[0.85]">B</span></div>
      <div class="border-r border-b border-black leading-[50px] text-[#ff0000]"><span class="inline-block scale-y-[1.27] tracking-[3px] pl-[3px]">92</span></div>
      <div class="border-r border-b border-[#d4d4d4]"></div><div class="border-b border-[#d4d4d4]"></div>

      <div class="bg-[#e8e8e8] border-r border-b border-[#c0c0c0] text-[#808080] text-[36px] leading-[44px] font-['Noto_Sans',sans-serif]">4</div>
      <div class="border-r border-b border-black leading-[50px]"><span class="inline-block scale-y-[1.27]">3</span></div>
      <div class="border-r border-b border-black leading-[50px]"><span class="inline-block scale-y-[1.27] scale-x-[0.85]">C</span></div>
      <div class="border-r border-b border-black leading-[50px]"><span class="inline-block scale-y-[1.27] tracking-[3px] pl-[3px]">89</span></div>
      <div class="border-r border-b border-[#d4d4d4]"></div><div class="border-b border-[#d4d4d4]"></div>

      <div class="bg-[#e8e8e8] border-r border-b border-[#c0c0c0] text-[#808080] text-[36px] leading-[44px] font-['Noto_Sans',sans-serif]">5</div>
      <div class="border-r border-b border-black leading-[50px]"><span class="inline-block scale-y-[1.27]">4</span></div>
      <div class="border-r border-b border-black leading-[50px]"><span class="inline-block scale-y-[1.27] scale-x-[0.85]">D</span></div>
      <div class="border-r border-b border-black leading-[50px]"><span class="inline-block scale-y-[1.27] tracking-[3px] pl-[3px]">93</span></div>
      <div class="border-r border-b border-[#d4d4d4]"></div><div class="border-b border-[#d4d4d4]"></div>

      <div class="bg-[#e8e8e8] border-r border-b border-[#c0c0c0] text-[#808080] text-[36px] leading-[44px] font-['Noto_Sans',sans-serif]">6</div>
      <div class="border-r border-b border-black leading-[50px]"><span class="inline-block scale-y-[1.27]">5</span></div>
      <div class="border-r border-b border-black leading-[50px]"><span class="inline-block scale-y-[1.27] scale-x-[0.85]">E</span></div>
      <div class="border-r border-b border-black leading-[50px]"><span class="inline-block scale-y-[1.27] tracking-[3px] pl-[3px]">77</span></div>
      <div class="border-r border-b border-[#d4d4d4]"></div><div class="border-b border-[#d4d4d4]"></div>

      <div class="bg-[#e8e8e8] border-r border-b border-[#c0c0c0] text-[#808080] text-[36px] leading-[44px] font-['Noto_Sans',sans-serif]">7</div>
      <div class="border-r border-b border-[#d4d4d4]"></div><div class="border-r border-b border-[#d4d4d4]"></div><div class="border-r border-b border-[#d4d4d4]"></div><div class="border-r border-b border-[#d4d4d4]"></div><div class="border-b border-[#d4d4d4]"></div>
      <div class="bg-[#e8e8e8] border-r border-b border-[#c0c0c0] text-[#808080] text-[36px] leading-[44px] font-['Noto_Sans',sans-serif]">8</div>
      <div class="border-r border-b border-[#d4d4d4]"></div><div class="border-r border-b border-[#d4d4d4]"></div><div class="border-r border-b border-[#d4d4d4]"></div><div class="border-r border-b border-[#d4d4d4]"></div><div class="border-b border-[#d4d4d4]"></div>
      <div class="bg-[#e8e8e8] border-r border-b border-[#c0c0c0] text-[#808080] text-[36px] leading-[44px] font-['Noto_Sans',sans-serif]">9</div>
      <div class="border-r border-b border-[#d4d4d4]"></div><div class="border-r border-b border-[#d4d4d4]"></div><div class="border-r border-b border-[#d4d4d4]"></div><div class="border-r border-b border-[#d4d4d4]"></div><div class="border-b border-[#d4d4d4]"></div>
      <div class="bg-[#e8e8e8] border-r border-b border-[#c0c0c0] text-[#808080] text-[36px] leading-[44px] font-['Noto_Sans',sans-serif]">10</div>
      <div class="border-r border-b border-[#d4d4d4]"></div><div class="border-r border-b border-[#d4d4d4]"></div><div class="border-r border-b border-[#d4d4d4]"></div><div class="border-r border-b border-[#d4d4d4]"></div><div class="border-b border-[#d4d4d4]"></div>
      <div class="bg-[#e8e8e8] border-r border-b border-[#c0c0c0] text-[#808080] text-[36px] leading-[44px] font-['Noto_Sans',sans-serif]">11</div>
      <div class="border-r border-b border-[#d4d4d4]"></div><div class="border-r border-b border-[#d4d4d4]"></div><div class="border-r border-b border-[#d4d4d4]"></div><div class="border-r border-b border-[#d4d4d4]"></div><div class="border-b border-[#d4d4d4]"></div>
      <div class="bg-[#e8e8e8] border-r border-b border-[#c0c0c0] text-[#808080] text-[36px] leading-[44px] font-['Noto_Sans',sans-serif]">12</div>
      <div class="border-r border-b border-[#d4d4d4]"></div><div class="border-r border-b border-[#d4d4d4]"></div><div class="border-r border-b border-[#d4d4d4]"></div><div class="border-r border-b border-[#d4d4d4]"></div><div class="border-b border-[#d4d4d4]"></div>
      <div class="bg-[#e8e8e8] border-r border-b border-[#c0c0c0] text-[#808080] text-[36px] leading-[44px] font-['Noto_Sans',sans-serif]">13</div>
      <div class="border-r border-b border-[#d4d4d4]"></div><div class="border-r border-b border-[#d4d4d4]"></div><div class="border-r border-b border-[#d4d4d4]"></div><div class="border-r border-b border-[#d4d4d4]"></div><div class="border-b border-[#d4d4d4]"></div>
      <div class="bg-[#e8e8e8] border-r border-b border-[#c0c0c0] text-[#808080] text-[36px] leading-[44px] font-['Noto_Sans',sans-serif]">14</div>
      <div class="border-r border-b border-[#d4d4d4]"></div><div class="border-r border-b border-[#d4d4d4]"></div><div class="border-r border-b border-[#d4d4d4]"></div><div class="border-r border-b border-[#d4d4d4]"></div><div class="border-b border-[#d4d4d4]"></div>
      <div class="bg-[#e8e8e8] border-r border-b border-[#c0c0c0] text-[#808080] text-[36px] leading-[44px] font-['Noto_Sans',sans-serif]">15</div>
      <div class="border-r border-b border-[#d4d4d4]"></div><div class="border-r border-b border-[#d4d4d4]"></div><div class="border-r border-b border-[#d4d4d4]"></div><div class="border-r border-b border-[#d4d4d4]"></div><div class="border-b border-[#d4d4d4]"></div>
      <div class="bg-[#e8e8e8] border-r border-b border-[#c0c0c0] text-[#808080] text-[36px] leading-[44px] font-['Noto_Sans',sans-serif]">16</div>
      <div class="border-r border-b border-[#d4d4d4]"></div><div class="border-r border-b border-[#d4d4d4]"></div><div class="border-r border-b border-[#d4d4d4]"></div><div class="border-r border-b border-[#d4d4d4]"></div><div class="border-b border-[#d4d4d4]"></div>

      <!-- selected cell C3 -->
      <div class="absolute left-[440px] top-[144px] w-[182px] h-[46px] border-2 border-[#43a546]">
        <div class="absolute right-[-4px] bottom-[-4px] w-[6px] h-[6px] bg-[#43a546] border border-white"></div>
      </div>
    </div>
  </div>

  <!-- wallpaper strip along the top edge -->
  <div class="absolute left-0 top-0 w-full h-[1px] bg-[#00545a]"></div>
  <div class="absolute left-[1102px] top-0 w-[25px] h-[1px] bg-[#8a7a4a]"></div>
</body>
</html>
